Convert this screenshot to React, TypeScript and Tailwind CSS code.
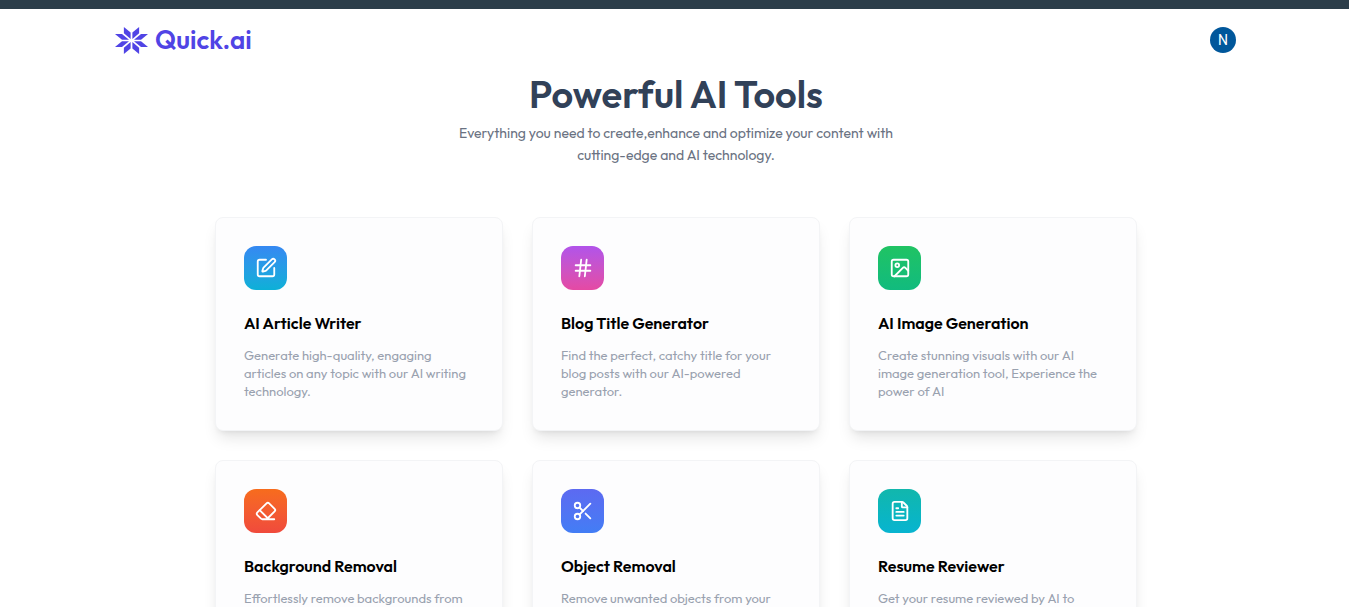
import { Eraser, FileText, Hash, Image, Scissors, SquarePen, type LucideIcon } from 'lucide-react';

type Tool = {
  title: string;
  description: string;
  Icon: LucideIcon;
  gradient: string;
};

const tools: Tool[] = [
  {
    title: 'AI Article Writer',
    description: 'Generate high-quality, engaging articles on any topic with our AI writing technology.',
    Icon: SquarePen,
    gradient: 'from-[#3588f2] to-[#0bb0d7]',
  },
  {
    title: 'Blog Title Generator',
    description: 'Find the perfect, catchy title for your blog posts with our AI-powered generator.',
    Icon: Hash,
    gradient: 'from-[#b153ea] to-[#e549a3]',
  },
  {
    title: 'AI Image Generation',
    description: 'Create stunning visuals with our AI image generation tool, Experience the power of AI',
    Icon: Image,
    gradient: 'from-[#20c363] to-[#11bb7e]',
  },
  {
    title: 'Background Removal',
    description: 'Effortlessly remove backgrounds from your images with our AI-driven tool.',
    Icon: Eraser,
    gradient: 'from-[#f76c1c] to-[#f04a3c]',
  },
  {
    title: 'Object Removal',
    description: 'Remove unwanted objects from your images seamlessly with our AI tool.',
    Icon: Scissors,
    gradient: 'from-[#5c6af1] to-[#427df5]',
  },
  {
    title: 'Resume Reviewer',
    description: 'Get your resume reviewed by AI to improve your chances of landing a job.',
    Icon: FileText,
    gradient: 'from-[#12b7ac] to-[#08b4d0]',
  },
];

function LogoMark() {
  return (
    <svg viewBox="0 0 33 27" className="h-[27px] w-[33px] fill-[#5044e5]" aria-hidden="true">
      <path d="M8.9 0 15.6 5.4V11.9L8.9 6.3Z" />
      <path d="M24.1 0 17.4 5.4V11.9L24.1 6.3Z" />
      <path d="M8.9 27 15.6 21.6V15.1L8.9 20.7Z" />
      <path d="M24.1 27 17.4 21.6V15.1L24.1 20.7Z" />
      <path d="M0 6.9H7L14 12.8H7Z" />
      <path d="M33 6.9H26L19 12.8H26Z" />
      <path d="M0 20.1H7L14 14.2H7Z" />
      <path d="M33 20.1H26L19 14.2H26Z" />
    </svg>
  );
}

function ToolCard({ title, description, Icon, gradient }: Tool) {
  return (
    <a
      href="#"
      className="block w-72 rounded-lg border border-gray-100 bg-[#fdfdfe] p-7 shadow-lg"
    >
      <span className={`flex h-11 w-[43px] items-center justify-center rounded-xl bg-linear-to-b text-white ${gradient}`}>
        <Icon size={22} strokeWidth={2} />
      </span>
      <h3 className="mt-[21px] text-base leading-6 font-semibold text-black">{title}</h3>
      <p className="mt-[11px] pb-0.5 text-[13px] leading-[18px] text-gray-400">{description}</p>
    </a>
  );
}

export default function App() {
  return (
    <div className="min-h-screen border-t-[9px] border-[#2c3e4a] bg-white pb-12 font-['Outfit',Lato,sans-serif]">
      <header className="flex h-[62px] items-center justify-between pr-[113px] pl-[115px]">
        <a href="#" className="flex items-center gap-[7px] text-[#5044e5]">
          <LogoMark />
          <span className="text-[26px] leading-8 font-semibold">Quick.ai</span>
        </a>
        <button
          type="button"
          aria-label="Account"
          className="flex size-[26px] items-center justify-center rounded-full bg-[#00579b] font-[family-name:Roboto] text-sm font-normal text-white"
        >
          N
        </button>
      </header>
      <main className="pl-[3px]">
        <div className="text-center">
          <h1 className="text-[38px] leading-[47px] font-semibold text-slate-700">Powerful AI Tools</h1>
          <p className="mx-auto mt-1 max-w-[460px] text-sm leading-[22px] text-gray-500">
            Everything you need to create,enhance and optimize your content with cutting-edge and AI technology.
          </p>
        </div>
        <section className="mx-auto mt-[51px] flex max-w-[960px] flex-wrap justify-center gap-[29px]">
          {tools.map((tool) => (
            <ToolCard key={tool.title} {...tool} />
          ))}
        </section>
      </main>
    </div>
  );
}
